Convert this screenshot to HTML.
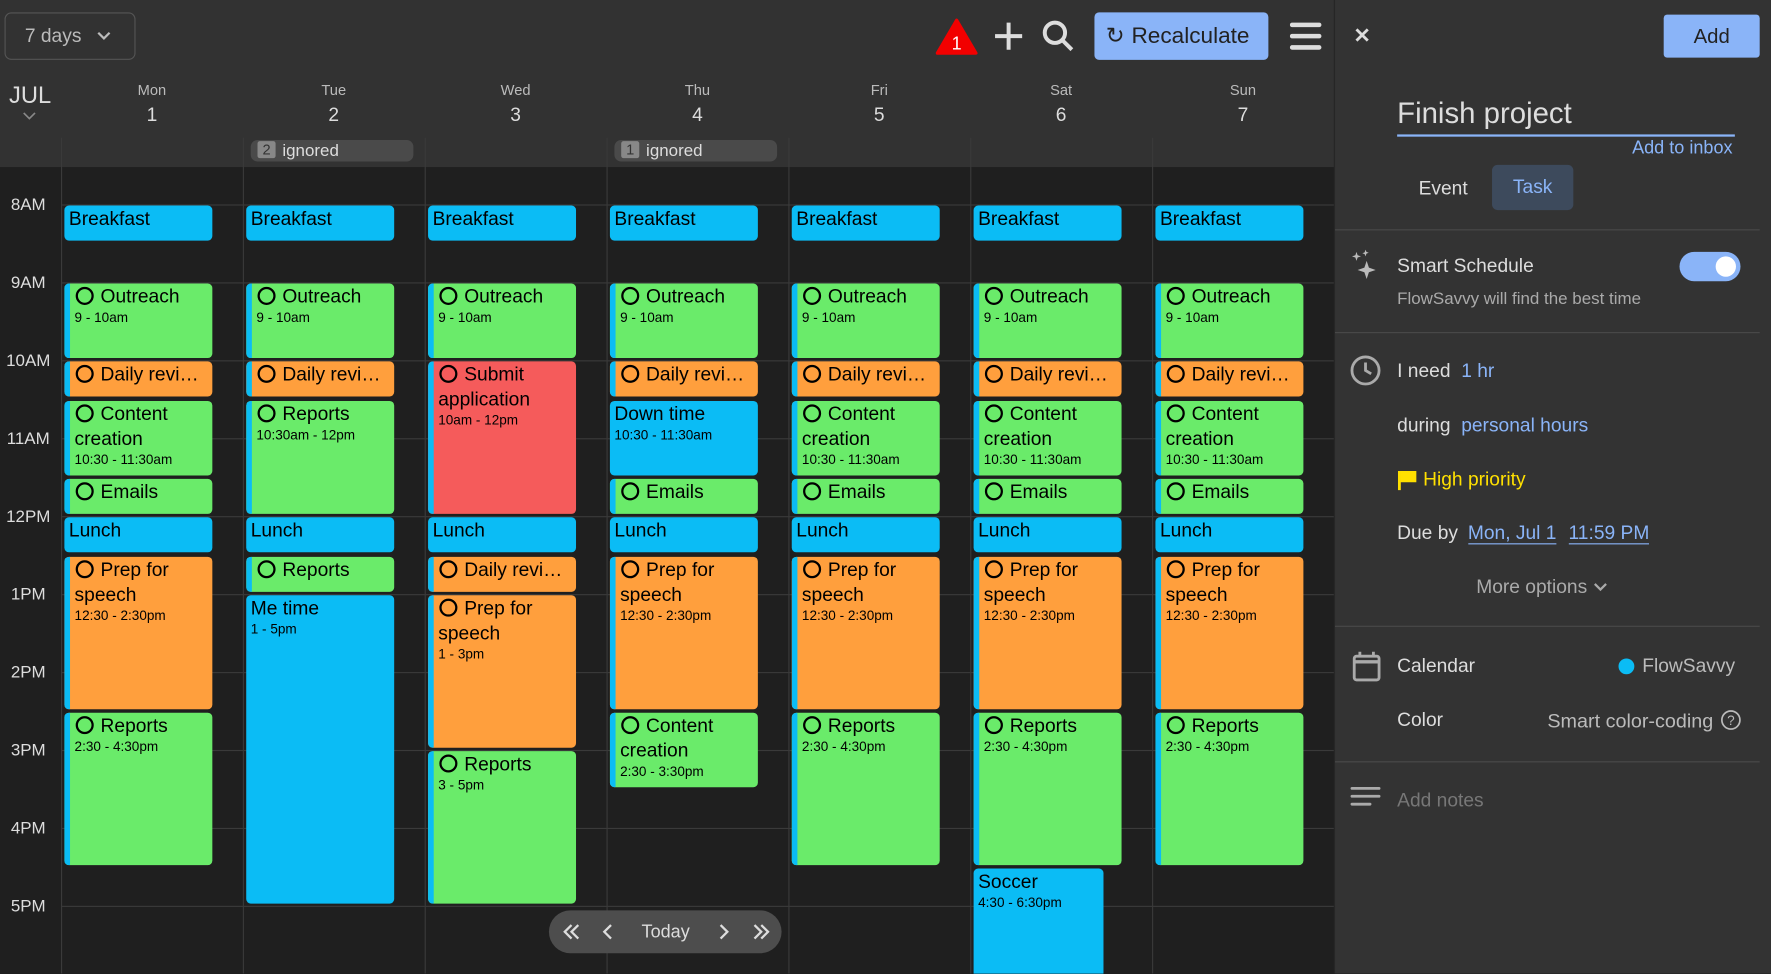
<!DOCTYPE html>
<html><head><meta charset="utf-8"><style>
*{box-sizing:border-box;margin:0;padding:0}
html,body{width:1771px;height:974px;overflow:hidden;background:#1f1f1f;font-family:"Liberation Sans",sans-serif}
#w{position:absolute;left:0;top:0;width:1568px;height:862px;transform:scale(1.12946);transform-origin:0 0;overflow:hidden}
.a{position:absolute}
.top{left:0;top:0;width:1181px;height:148px;background:#323232}
.body{left:0;top:148px;width:1181px;height:714px;background:#1f1f1f}
.hl{position:absolute;left:54px;width:1127px;height:1px;background:#3a3a3a}
.vl{position:absolute;top:122px;width:1px;height:740px;background:#3a3a3a}
.tl{position:absolute;left:0;width:50px;text-align:center;color:#ddd;font-size:15px}
.dn{position:absolute;width:161px;text-align:center;color:#bbb;font-size:13px;top:72px}
.dd{position:absolute;width:161px;text-align:center;color:#ddd;font-size:17px;top:92px}
.ig{position:absolute;top:124px;height:19px;width:144px;background:#4a4a4a;border-radius:6px;color:#ddd;font-size:15px;line-height:19px;padding-left:6px}
.ig b{display:inline-block;background:#888;color:#333;font-weight:normal;font-size:13px;width:16px;height:15px;line-height:15px;text-align:center;border-radius:2px;margin-right:6px;vertical-align:1px}
.c{position:absolute;top:0;width:161px;height:862px}
.e{position:absolute;left:3px;width:131px;border-radius:4px;color:#000;font-size:17px;line-height:22px;padding:1px 4px 0;overflow:hidden}
.e small{display:block;font-size:12px;line-height:14px}
.t{padding-left:9px}
.t:before{content:"";position:absolute;left:0;top:0;bottom:0;width:5px;background:#0bbcf5}
.o{display:inline-block;width:16px;height:16px;border:2px solid #000;border-radius:50%;margin:0 6px 0 1px;vertical-align:-2px}
.B{background:#0bbcf5}.G{background:#6aeb6a}.O{background:#ff9f3d}.R{background:#f55b5b}
.el{white-space:nowrap}
.rp{left:1181px;top:0;width:387px;height:862px;background:#333;border-left:1px solid #262626}
.rt{position:absolute;color:#ddd;font-size:17px}
.bl{color:#8ab4f8}
.dv{position:absolute;left:0;width:376px;height:1px;background:#4a4a4a}
</style></head><body><div id="w">
<div class="a top"></div><div class="a body"></div>
<div class="hl" style="top:181px"></div><div class="hl" style="top:250px"></div><div class="hl" style="top:319px"></div><div class="hl" style="top:388px"></div><div class="hl" style="top:457px"></div><div class="hl" style="top:526px"></div><div class="hl" style="top:595px"></div><div class="hl" style="top:664px"></div><div class="hl" style="top:733px"></div><div class="hl" style="top:802px"></div>
<div class="vl" style="left:54px"></div><div class="vl" style="left:215px"></div><div class="vl" style="left:376px"></div><div class="vl" style="left:537px"></div><div class="vl" style="left:698px"></div><div class="vl" style="left:859px"></div><div class="vl" style="left:1020px"></div>
<div class="tl" style="top:173px">8AM</div><div class="tl" style="top:242px">9AM</div><div class="tl" style="top:311px">10AM</div><div class="tl" style="top:380px">11AM</div><div class="tl" style="top:449px">12PM</div><div class="tl" style="top:518px">1PM</div><div class="tl" style="top:587px">2PM</div><div class="tl" style="top:656px">3PM</div><div class="tl" style="top:725px">4PM</div><div class="tl" style="top:794px">5PM</div>

<div class="a" style="left:4px;top:11px;width:116px;height:42px;border:1px solid #555;border-radius:6px;color:#bbb;font-size:17px;line-height:40px;padding-left:17px">7 days <svg width="14" height="10" viewBox="0 0 14 10" style="margin-left:8px"><path d="M2 2l5 5 5-5" stroke="#bbb" stroke-width="2" fill="none"/></svg></div>
<div class="a" style="left:8px;top:73px;color:#ddd;font-size:21px">JUL</div>
<svg class="a" style="left:19px;top:98px" width="14" height="9"><path d="M2 2l5 5 5-5" stroke="#888" stroke-width="1.5" fill="none"/></svg>
<div class="dn" style="left:54px">Mon</div><div class="dd" style="left:54px">1</div>
<div class="dn" style="left:215px">Tue</div><div class="dd" style="left:215px">2</div>
<div class="dn" style="left:376px">Wed</div><div class="dd" style="left:376px">3</div>
<div class="dn" style="left:537px">Thu</div><div class="dd" style="left:537px">4</div>
<div class="dn" style="left:698px">Fri</div><div class="dd" style="left:698px">5</div>
<div class="dn" style="left:859px">Sat</div><div class="dd" style="left:859px">6</div>
<div class="dn" style="left:1020px">Sun</div><div class="dd" style="left:1020px">7</div>
<div class="ig" style="left:222px"><b>2</b>ignored</div>
<div class="ig" style="left:544px"><b>1</b>ignored</div>

<svg class="a" style="left:828px;top:16px" width="38" height="33"><path d="M19 2L36 31H2Z" fill="#f20000" stroke="#f20000" stroke-width="3" stroke-linejoin="round"/><text x="19" y="28" fill="#fff" font-size="16" text-anchor="middle" font-family="Liberation Sans">1</text></svg>
<svg class="a" style="left:879px;top:18px" width="28" height="28"><path d="M14 2v24M2 14h24" stroke="#ddd" stroke-width="3.5"/></svg>
<svg class="a" style="left:922px;top:17px" width="30" height="30"><circle cx="12" cy="12" r="9" stroke="#ddd" stroke-width="3.5" fill="none"/><path d="M18 18l9 9" stroke="#ddd" stroke-width="3.5"/></svg>
<div class="a" style="left:969px;top:11px;width:154px;height:42px;background:#8ab4f8;border-radius:4px;color:#222;font-size:20px;line-height:42px;padding-left:10px"><span style="font-size:20px;margin-right:6px">&#x21bb;</span>Recalculate</div>
<svg class="a" style="left:1142px;top:19px" width="28" height="26"><path d="M2 3h24M2 13h24M2 23h24" stroke="#ddd" stroke-width="4" stroke-linecap="round"/></svg>

<div class="c" style="left:54px">
<div class="e B" style="top:182px;height:31px">Breakfast</div>
<div class="e G t" style="top:251px;height:66px"><span class="o"></span>Outreach<small>9 - 10am</small></div>
<div class="e O t el" style="top:320px;height:31px"><span class="o"></span>Daily revi…</div>
<div class="e G t" style="top:355px;height:66px"><span class="o"></span>Content creation<small>10:30 - 11:30am</small></div>
<div class="e G t" style="top:424px;height:31px"><span class="o"></span>Emails</div>
<div class="e B" style="top:458px;height:31px">Lunch</div>
<div class="e O t" style="top:493px;height:135px"><span class="o"></span>Prep for speech<small>12:30 - 2:30pm</small></div>
<div class="e G t" style="top:631px;height:135px"><span class="o"></span>Reports<small>2:30 - 4:30pm</small></div>
</div>
<div class="c" style="left:215px">
<div class="e B" style="top:182px;height:31px">Breakfast</div>
<div class="e G t" style="top:251px;height:66px"><span class="o"></span>Outreach<small>9 - 10am</small></div>
<div class="e O t el" style="top:320px;height:31px"><span class="o"></span>Daily revi…</div>
<div class="e G t" style="top:355px;height:100px"><span class="o"></span>Reports<small>10:30am - 12pm</small></div>
<div class="e B" style="top:458px;height:31px">Lunch</div>
<div class="e G t" style="top:493px;height:31px"><span class="o"></span>Reports</div>
<div class="e B" style="top:527px;height:273px">Me time<small>1 - 5pm</small></div>
</div>
<div class="c" style="left:376px">
<div class="e B" style="top:182px;height:31px">Breakfast</div>
<div class="e G t" style="top:251px;height:66px"><span class="o"></span>Outreach<small>9 - 10am</small></div>
<div class="e R t" style="top:320px;height:135px"><span class="o"></span>Submit application<small>10am - 12pm</small></div>
<div class="e B" style="top:458px;height:31px">Lunch</div>
<div class="e O t el" style="top:493px;height:31px"><span class="o"></span>Daily revi…</div>
<div class="e O t" style="top:527px;height:135px"><span class="o"></span>Prep for speech<small>1 - 3pm</small></div>
<div class="e G t" style="top:665px;height:135px"><span class="o"></span>Reports<small>3 - 5pm</small></div>
</div>
<div class="c" style="left:537px">
<div class="e B" style="top:182px;height:31px">Breakfast</div>
<div class="e G t" style="top:251px;height:66px"><span class="o"></span>Outreach<small>9 - 10am</small></div>
<div class="e O t el" style="top:320px;height:31px"><span class="o"></span>Daily revi…</div>
<div class="e B" style="top:355px;height:66px">Down time<small>10:30 - 11:30am</small></div>
<div class="e G t" style="top:424px;height:31px"><span class="o"></span>Emails</div>
<div class="e B" style="top:458px;height:31px">Lunch</div>
<div class="e O t" style="top:493px;height:135px"><span class="o"></span>Prep for speech<small>12:30 - 2:30pm</small></div>
<div class="e G t" style="top:631px;height:66px"><span class="o"></span>Content creation<small>2:30 - 3:30pm</small></div>
</div>
<div class="c" style="left:698px">
<div class="e B" style="top:182px;height:31px">Breakfast</div>
<div class="e G t" style="top:251px;height:66px"><span class="o"></span>Outreach<small>9 - 10am</small></div>
<div class="e O t el" style="top:320px;height:31px"><span class="o"></span>Daily revi…</div>
<div class="e G t" style="top:355px;height:66px"><span class="o"></span>Content creation<small>10:30 - 11:30am</small></div>
<div class="e G t" style="top:424px;height:31px"><span class="o"></span>Emails</div>
<div class="e B" style="top:458px;height:31px">Lunch</div>
<div class="e O t" style="top:493px;height:135px"><span class="o"></span>Prep for speech<small>12:30 - 2:30pm</small></div>
<div class="e G t" style="top:631px;height:135px"><span class="o"></span>Reports<small>2:30 - 4:30pm</small></div>
</div>
<div class="c" style="left:859px">
<div class="e B" style="top:182px;height:31px">Breakfast</div>
<div class="e G t" style="top:251px;height:66px"><span class="o"></span>Outreach<small>9 - 10am</small></div>
<div class="e O t el" style="top:320px;height:31px"><span class="o"></span>Daily revi…</div>
<div class="e G t" style="top:355px;height:66px"><span class="o"></span>Content creation<small>10:30 - 11:30am</small></div>
<div class="e G t" style="top:424px;height:31px"><span class="o"></span>Emails</div>
<div class="e B" style="top:458px;height:31px">Lunch</div>
<div class="e O t" style="top:493px;height:135px"><span class="o"></span>Prep for speech<small>12:30 - 2:30pm</small></div>
<div class="e G t" style="top:631px;height:135px"><span class="o"></span>Reports<small>2:30 - 4:30pm</small></div>
<div class="e B" style="top:769px;height:135px;width:115px">Soccer<small>4:30 - 6:30pm</small></div>
</div>
<div class="c" style="left:1020px">
<div class="e B" style="top:182px;height:31px">Breakfast</div>
<div class="e G t" style="top:251px;height:66px"><span class="o"></span>Outreach<small>9 - 10am</small></div>
<div class="e O t el" style="top:320px;height:31px"><span class="o"></span>Daily revi…</div>
<div class="e G t" style="top:355px;height:66px"><span class="o"></span>Content creation<small>10:30 - 11:30am</small></div>
<div class="e G t" style="top:424px;height:31px"><span class="o"></span>Emails</div>
<div class="e B" style="top:458px;height:31px">Lunch</div>
<div class="e O t" style="top:493px;height:135px"><span class="o"></span>Prep for speech<small>12:30 - 2:30pm</small></div>
<div class="e G t" style="top:631px;height:135px"><span class="o"></span>Reports<small>2:30 - 4:30pm</small></div>
</div>

<div class="a" style="left:486px;top:806px;width:206px;height:38px;background:#4d4d4d;border-radius:19px;color:#ddd;font-size:16px;line-height:38px">
<svg class="a" style="left:12px;top:12px" width="16" height="14"><path d="M8 1L2 7l6 6M14 1L8 7l6 6" stroke="#ddd" stroke-width="2" fill="none"/></svg>
<svg class="a" style="left:47px;top:12px" width="10" height="14"><path d="M8 1L2 7l6 6" stroke="#ddd" stroke-width="2" fill="none"/></svg>
<span class="a" style="left:82px;top:1px">Today</span>
<svg class="a" style="left:150px;top:12px" width="10" height="14"><path d="M2 1l6 6-6 6" stroke="#ddd" stroke-width="2" fill="none"/></svg>
<svg class="a" style="left:180px;top:12px" width="16" height="14"><path d="M2 1l6 6-6 6M8 1l6 6-6 6" stroke="#ddd" stroke-width="2" fill="none"/></svg>
</div>

<div class="a rp">
<svg class="a" style="left:17px;top:24px" width="14" height="14"><path d="M2 2l10 10M12 2L2 12" stroke="#ddd" stroke-width="2.5"/></svg>
<div class="a" style="left:291px;top:13px;width:85px;height:38px;background:#8ab4f8;border-radius:3px;color:#222;font-size:18px;line-height:38px;text-align:center">Add</div>
<div class="rt" style="left:55px;top:85px;font-size:26px">Finish project</div>
<div class="a" style="left:55px;top:119px;width:299px;height:2px;background:#8ab4f8"></div>
<div class="rt bl" style="left:263px;top:123px;font-size:16px">Add to inbox</div>
<div class="rt" style="left:74px;top:157px">Event</div>
<div class="a" style="left:139px;top:146px;width:72px;height:40px;background:#3d4a5c;border-radius:5px;color:#8ab4f8;font-size:17px;line-height:40px;text-align:center">Task</div>
<div class="dv" style="top:203px"></div>
<svg class="a" style="left:15px;top:221px" width="24" height="30"><path d="M13 10l2 6 6 2-6 2-2 6-2-6-6-2 6-2z" fill="#bbb"/><path d="M4 2l1 3 3 1-3 1-1 3-1-3-3-1 3-1zM12 0l.8 2 2 .8-2 .8L12 6l-.8-2-2-.8 2-.8z" fill="#bbb"/></svg>
<div class="rt" style="left:55px;top:226px">Smart Schedule</div>
<div class="rt" style="left:55px;top:256px;font-size:15px;color:#aaa">FlowSavvy will find the best time</div>
<div class="a" style="left:305px;top:223px;width:54px;height:26px;background:#8ab4f8;border-radius:13px"><div class="a" style="left:32px;top:4px;width:18px;height:18px;background:#fff;border-radius:50%"></div></div>
<div class="dv" style="top:294px"></div>
<svg class="a" style="left:13px;top:314px" width="28" height="28"><circle cx="14" cy="14" r="12" stroke="#aaa" stroke-width="2.5" fill="none"/><path d="M14 7v7l5 3" stroke="#aaa" stroke-width="2.5" fill="none"/></svg>
<div class="rt" style="left:55px;top:319px">I need <span class="bl">&nbsp;1 hr</span></div>
<div class="rt" style="left:55px;top:367px">during <span class="bl">&nbsp;personal hours</span></div>
<svg class="a" style="left:55px;top:415px" width="18" height="20"><path d="M2 2v17" stroke="#ffe000" stroke-width="2.5"/><path d="M3 2h14v10H3z" fill="#ffe000"/></svg>
<div class="rt" style="left:78px;top:415px;color:#ffe000">High priority</div>
<div class="rt" style="left:55px;top:462px">Due by <span class="bl" style="border-bottom:1px solid #8ab4f8;margin-left:4px">Mon, Jul 1</span> <span class="bl" style="border-bottom:1px solid #8ab4f8;margin-left:6px">11:59 PM</span></div>
<div class="rt" style="left:125px;top:510px;color:#aaa">More options <svg width="14" height="10"><path d="M2 2l5 5 5-5" stroke="#aaa" stroke-width="2" fill="none"/></svg></div>
<div class="dv" style="top:554px"></div>
<svg class="a" style="left:15px;top:576px" width="26" height="28"><rect x="2" y="5" width="22" height="21" rx="2" stroke="#aaa" stroke-width="2.5" fill="none"/><path d="M2 10h22" stroke="#aaa" stroke-width="3"/><path d="M7 1v5M19 1v5" stroke="#aaa" stroke-width="2.5"/></svg>
<div class="rt" style="left:55px;top:580px">Calendar</div>
<div class="a" style="left:251px;top:583px;width:14px;height:14px;background:#0bbcf5;border-radius:50%"></div>
<div class="rt" style="left:272px;top:580px;color:#bbb">FlowSavvy</div>
<div class="rt" style="left:55px;top:628px">Color</div>
<div class="rt" style="left:188px;top:628px;color:#bbb;font-size:17.5px">Smart color-coding</div>
<svg class="a" style="left:341px;top:628px" width="19" height="19"><circle cx="9.5" cy="9.5" r="8" stroke="#bbb" stroke-width="1.5" fill="none"/><text x="9.5" y="14" font-size="12" fill="#bbb" text-anchor="middle" font-family="Liberation Sans">?</text></svg>
<div class="dv" style="top:674px"></div>
<svg class="a" style="left:13px;top:695px" width="28" height="22"><path d="M2 3h24M2 10h24M2 17h16" stroke="#aaa" stroke-width="2.5" stroke-linecap="round"/></svg>
<div class="rt" style="left:55px;top:699px;color:#777">Add notes</div>
</div>
</div></body></html>
